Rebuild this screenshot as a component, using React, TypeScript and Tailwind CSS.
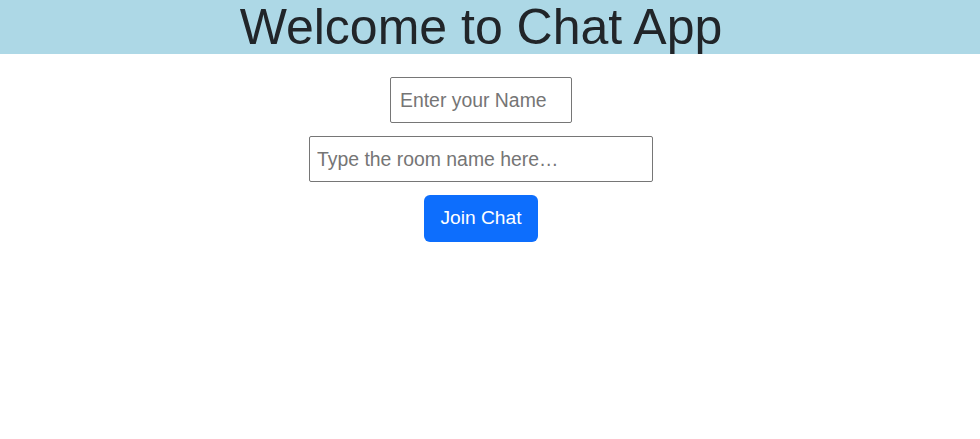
import React from "react";

export default function App() {
  return (
    <div className="w-[980px] h-[439px] bg-white" style={{ fontFamily: '"Liberation Sans", Arial, sans-serif' }}>
      <div className="h-[54px] bg-[#add8e6] w-full">
        <h1 className="w-[962px] text-center text-[50px] leading-[54px] text-[#212529] font-normal">Welcome to Chat App</h1>
      </div>
      <div className="w-[962px] flex flex-col items-center pt-[23px] gap-[13px]">
        <input
          className="w-[182px] h-[46px] border border-[#767676] rounded-[2px] px-[9px] text-[19.4px] text-[#212529] placeholder:text-[#757575] outline-none"
          placeholder="Enter your Name"
        />
        <input
          className="w-[344px] h-[46px] border border-[#767676] rounded-[2px] px-[7px] text-[19.4px] text-[#212529] placeholder:text-[#757575] outline-none"
          placeholder="Type the room name here…"
        />
        <button className="w-[114px] h-[47px] bg-[#0d6efd] rounded-[6px] text-white text-[19.2px]">Join Chat</button>
      </div>
    </div>
  );
}
